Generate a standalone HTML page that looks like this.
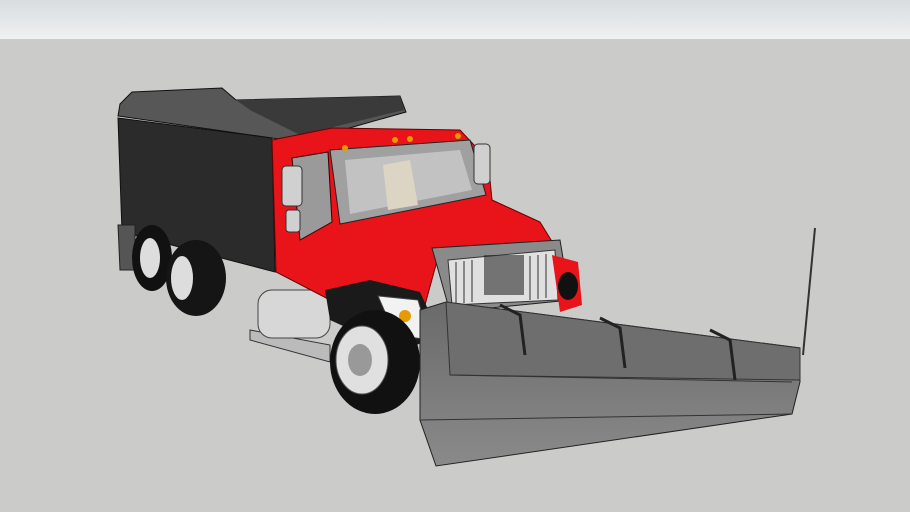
<!DOCTYPE html>
<html><head><style>
html,body{margin:0;padding:0;width:910px;height:512px;overflow:hidden;}
</style></head><body>
<svg width="910" height="512" viewBox="0 0 910 512" xmlns="http://www.w3.org/2000/svg">
<defs>
<linearGradient id="sky" x1="0" y1="0" x2="0" y2="1"><stop offset="0" stop-color="#d8dde0"/><stop offset="1" stop-color="#eff0f1"/></linearGradient>
<linearGradient id="plow" x1="0" y1="0" x2="0" y2="1"><stop offset="0" stop-color="#6a6a6a"/><stop offset="1" stop-color="#8a8a8a"/></linearGradient>
</defs>
<rect x="0" y="0" width="910" height="39" fill="url(#sky)"/>
<rect x="0" y="39" width="910" height="473" fill="#cbcbc9"/>
<polygon points="118,118 272,138 275,272 122,232" fill="#2b2b2b" stroke="#111"/>
<polygon points="132,92 222,88 236,100 400,96 406,112 300,142 272,138 118,116 120,104" fill="#575757" stroke="#111"/>
<polygon points="236,100 400,96 404,110 300,135 250,110" fill="#3a3a3a"/>
<polygon points="118,225 135,225 135,270 120,270" fill="#555" stroke="#222"/>
<ellipse cx="152" cy="258" rx="20" ry="33" fill="#111"/>
<ellipse cx="150" cy="258" rx="10" ry="20" fill="#ddd"/>
<ellipse cx="196" cy="278" rx="30" ry="38" fill="#151515"/>
<ellipse cx="182" cy="278" rx="11" ry="22" fill="#ddd"/>
<polygon points="250,330 330,345 330,362 250,340" fill="#bbb" stroke="#333"/>
<rect x="258" y="290" width="72" height="48" rx="14" fill="#d7d7d7" stroke="#444"/>
<polygon points="272,140 332,128 460,130 488,160 492,200 540,222 556,248 440,250 425,305 330,300 276,272" fill="#e8141a" stroke="#600"/>
<polygon points="330,150 470,140 486,195 340,224" fill="#a0a0a0" stroke="#222"/>
<polygon points="345,160 460,150 472,190 350,214" fill="#c2c2c2"/>
<polygon points="383,165 410,160 418,205 388,210" fill="#ddd5c4"/>
<polygon points="292,158 328,152 332,222 300,240" fill="#9a9a9a" stroke="#300"/>
<rect x="282" y="166" width="20" height="40" rx="4" fill="#d0d0d0" stroke="#333"/>
<rect x="286" y="210" width="14" height="22" rx="3" fill="#d0d0d0" stroke="#333"/>
<rect x="474" y="144" width="16" height="40" rx="4" fill="#d0d0d0" stroke="#333"/>
<polygon points="325,290 370,280 420,292 440,335 400,352 330,320" fill="#1a1a1a"/>
<polygon points="378,296 418,300 430,340 395,335" fill="#f2f2f2" stroke="#444"/>
<circle cx="405" cy="316" r="6" fill="#e59a00"/>
<polygon points="432,248 560,240 570,300 450,312" fill="#8a8a8a" stroke="#222"/>
<polygon points="448,260 555,250 558,300 452,305" fill="#e0e0e0" stroke="#333"/>
<path d="M456,262 v42 M464,261 v42 M472,260 v42 M530,256 v44 M538,255 v44 M546,254 v44" stroke="#888" stroke-width="2"/>
<rect x="484" y="255" width="40" height="40" fill="#2a2a2a" opacity="0.6"/>
<polygon points="552,255 578,262 582,305 560,312" fill="#e8141a"/>
<ellipse cx="568" cy="286" rx="10" ry="14" fill="#111"/>
<circle cx="345" cy="148" r="3" fill="#e59a00"/><circle cx="395" cy="140" r="3" fill="#e59a00"/><circle cx="410" cy="139" r="3" fill="#e59a00"/><circle cx="458" cy="136" r="3" fill="#e59a00"/>
<ellipse cx="375" cy="362" rx="45" ry="52" fill="#111"/>
<ellipse cx="362" cy="360" rx="26" ry="34" fill="#e0e0e0" stroke="#555"/>
<ellipse cx="360" cy="360" rx="12" ry="16" fill="#999"/>
<polygon points="420,310 446,302 800,348 800,382 792,414 436,466 420,420" fill="url(#plow)" stroke="#222"/>
<polygon points="446,302 800,348 800,380 450,375" fill="#6e6e6e" stroke="#333"/>
<line x1="450" y1="375" x2="792" y2="382" stroke="#333"/>
<line x1="420" y1="420" x2="792" y2="414" stroke="#333"/>
<path d="M500,305 l20,10 l5,40 M600,318 l20,10 l5,40 M710,330 l20,10 l5,40" stroke="#222" stroke-width="3" fill="none"/>
<line x1="815" y1="228" x2="803" y2="355" stroke="#333" stroke-width="2"/>
</svg>
</body></html>
